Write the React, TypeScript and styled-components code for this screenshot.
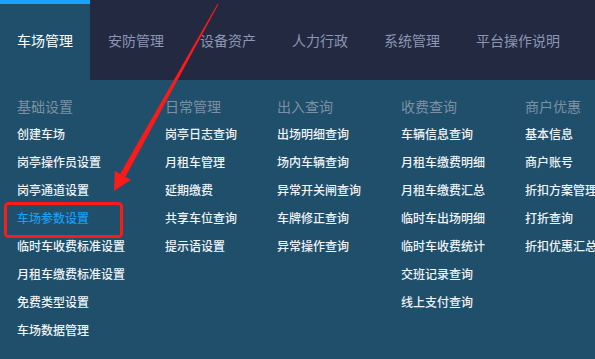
import React from 'react';
import styled, { createGlobalStyle } from 'styled-components';

const GlobalStyle = createGlobalStyle`
	html, body {
		margin: 0;
		padding: 0;
		background-color: #1f4f6b;
	}
	body {
		font-family: "Noto Sans CJK SC", "Noto Sans", sans-serif;
	}
`;

const Page = styled.div`
	position: relative;
	width: 595px;
	height: 359px;
	overflow: hidden;
	background-color: #1f4f6b;
`;

const NavBar = styled.div`
	display: flex;
	height: 80px;
	background-color: #232941;
`;

const Tab = styled.div<{ $active?: boolean }>`
	display: flex;
	align-items: center;
	height: 80px;
	box-sizing: border-box;
	padding: 0 ${(p) => (p.$active ? '17px' : '18px')};
	font-size: 14px;
	white-space: nowrap;
	color: ${(p) => (p.$active ? '#ffffff' : '#8b96b3')};
	background-color: ${(p) => (p.$active ? '#1f4f6b' : 'transparent')};
	border-top: 4px solid ${(p) => (p.$active ? '#19a3ff' : 'transparent')};
	padding-bottom: 4px;
`;

const Menu = styled.div`
	display: flex;
	gap: 40px;
	padding: 13px 0 0 17px;
`;

const Column = styled.div`
	display: flex;
	flex-direction: column;
`;

const Heading = styled.div`
	font-size: 14px;
	line-height: 27px;
	color: #7d8fa3;
	white-space: nowrap;
`;

const Item = styled.div<{ $selected?: boolean }>`
	font-size: 12px;
	line-height: 28px;
	font-weight: 500;
	white-space: nowrap;
	color: ${(p) => (p.$selected ? '#1b9df0' : '#eef3f7')};
`;

const Markup = styled.svg`
	position: absolute;
	left: 0;
	top: 0;
	pointer-events: none;
`;

const tabs = ['车场管理', '安防管理', '设备资产', '人力行政', '系统管理', '平台操作说明'];

const columns = [
	{
		title: '基础设置',
		items: ['创建车场', '岗亭操作员设置', '岗亭通道设置', '车场参数设置', '临时车收费标准设置', '月租车缴费标准设置', '免费类型设置', '车场数据管理'],
	},
	{
		title: '日常管理',
		items: ['岗亭日志查询', '月租车管理', '延期缴费', '共享车位查询', '提示语设置'],
	},
	{
		title: '出入查询',
		items: ['出场明细查询', '场内车辆查询', '异常开关闸查询', '车牌修正查询', '异常操作查询'],
	},
	{
		title: '收费查询',
		items: ['车辆信息查询', '月租车缴费明细', '月租车缴费汇总', '临时车出场明细', '临时车收费统计', '交班记录查询', '线上支付查询'],
	},
	{
		title: '商户优惠',
		items: ['基本信息', '商户账号', '折扣方案管理', '打折查询', '折扣优惠汇总'],
	},
];

const App: React.FC = () => {
	return (
		<Page>
			<GlobalStyle />
			<NavBar>
				{tabs.map((t, i) => (
					<Tab key={t} $active={i === 0}>{t}</Tab>
				))}
			</NavBar>
			<Menu>
				{columns.map((col) => (
					<Column key={col.title}>
						<Heading>{col.title}</Heading>
						{col.items.map((it) => (
							<Item key={it} $selected={it === '车场参数设置'}>{it}</Item>
						))}
					</Column>
				))}
			</Menu>
			{/* red annotation drawn over the screenshot */}
			<Markup width="595" height="359" viewBox="0 0 595 359">
				<rect x="5.5" y="203.5" width="116" height="33" rx="3" fill="none" stroke="#ff1a1a" strokeWidth="3" />
				<polygon points="218.4,4.2 217.6,3.8 120.2,173.8 125.4,176.8" fill="#ff1a1a" />
				<polygon points="114,191 114.9,170.9 130.7,179.7" fill="#ff1a1a" />
			</Markup>
		</Page>
	);
};

export default App;
